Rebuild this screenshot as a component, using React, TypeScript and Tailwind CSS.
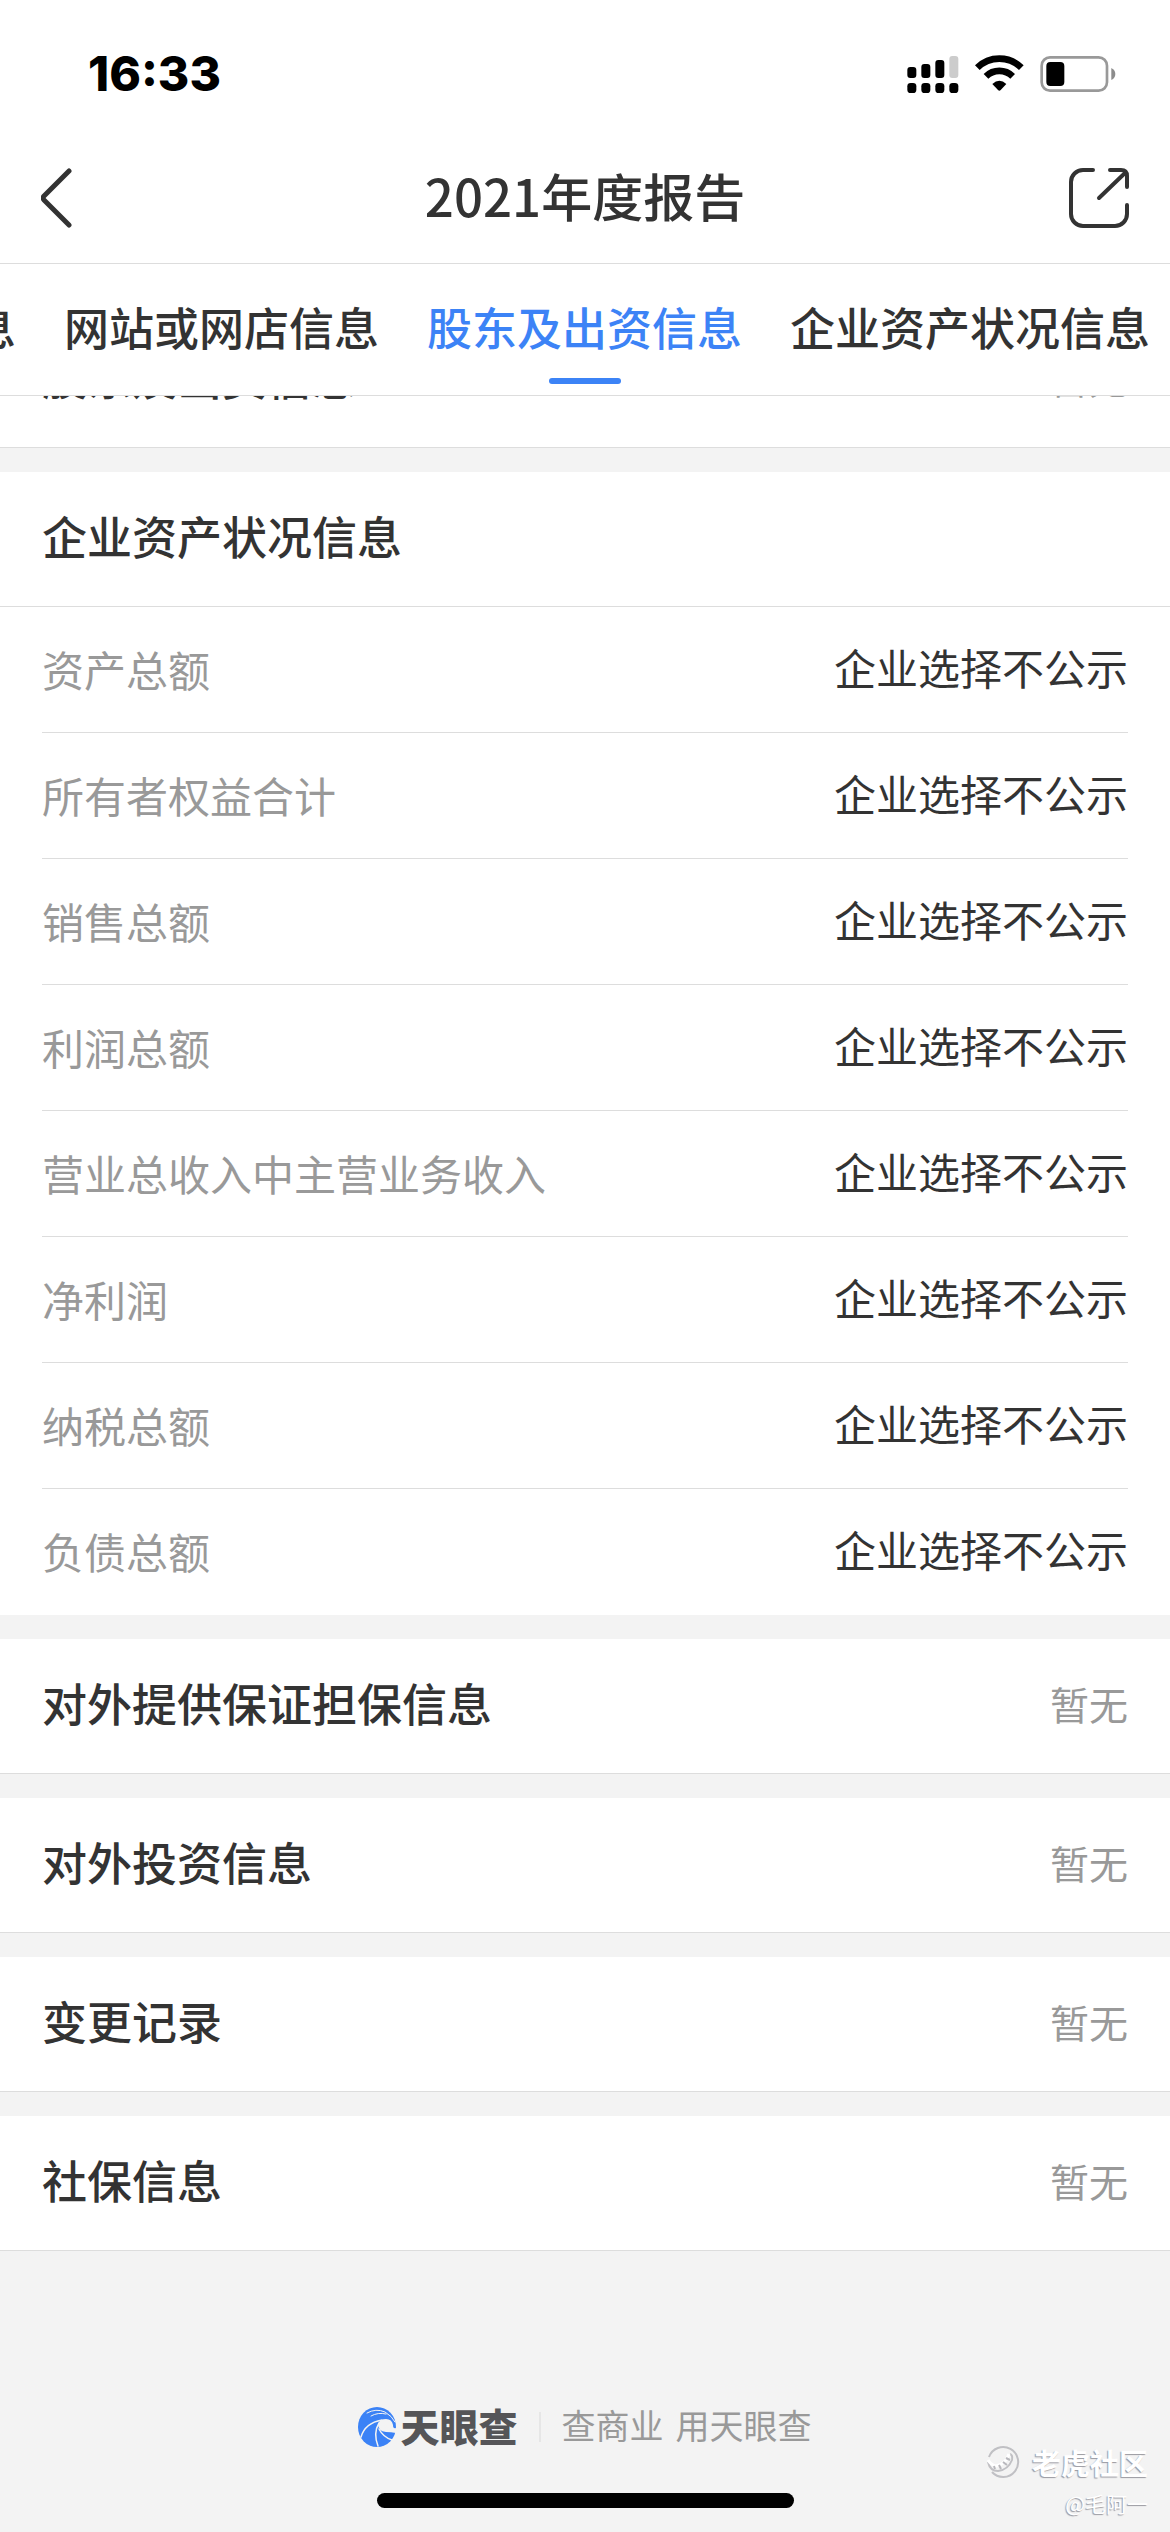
import React from "react";

type AssetRow = {
	label: string;
	value: string;
}

const tabs = ["基本信息", "网站或网店信息", "股东及出资信息", "企业资产状况信息"];
const activeTab = "股东及出资信息";

const assetRows: AssetRow[] = [
	{ label: "资产总额", value: "企业选择不公示" },
	{ label: "所有者权益合计", value: "企业选择不公示" },
	{ label: "销售总额", value: "企业选择不公示" },
	{ label: "利润总额", value: "企业选择不公示" },
	{ label: "营业总收入中主营业务收入", value: "企业选择不公示" },
	{ label: "净利润", value: "企业选择不公示" },
	{ label: "纳税总额", value: "企业选择不公示" },
	{ label: "负债总额", value: "企业选择不公示" },
];

const emptySections = ["对外提供保证担保信息", "对外投资信息", "变更记录", "社保信息"];

const StatusIcons = () => (
	<svg className="w-[210px] h-[38px]" viewBox="0 0 630 114" aria-hidden="true">
		<rect x="1" y="36" width="27" height="33" rx="9" />
		<rect x="43" y="27" width="27" height="42" rx="9" />
		<rect x="85" y="15" width="27" height="54" rx="9" />
		<rect x="127" y="3" width="27" height="66" rx="9" fill="#cccccc" />
		<rect x="1" y="84" width="27" height="30" rx="10" />
		<rect x="43" y="84" width="27" height="30" rx="10" />
		<rect x="85" y="84" width="27" height="30" rx="10" />
		<rect x="127" y="84" width="27" height="30" rx="10" />
		<g fill="none" stroke="#000000" strokeWidth="20">
			<path d="M211 38A94 94 0 0 1 343 38" />
			<path d="M237 64A57 57 0 0 1 317 64" />
		</g>
		<path d="M256 87Q277 67 298 87L281 105Q277 109 273 105Z" />
		<rect x="404" y="7" width="196" height="100" rx="25" fill="none" stroke="#999999" strokeWidth="8" />
		<rect x="418" y="21" width="54" height="72" rx="12" />
		<path d="M613 39Q625 45 625 57Q625 69 613 75Z" fill="#8c8c8c" />
	</svg>
)

const BackIcon = () => (
	<svg className="w-[32px] h-[60px]" viewBox="0 0 32 60" fill="none" stroke="#333333" strokeWidth="5" strokeLinecap="round" strokeLinejoin="round">
		<path d="M28 3L3 28Q1 30 3 32L28 57" />
	</svg>
)

const ShareIcon = () => (
	<svg className="w-[60px] h-[60px]" viewBox="0 0 60 60" fill="none" stroke="#333333" strokeWidth="4" strokeLinecap="round" strokeLinejoin="round">
		<path d="M24 2H14A12 12 0 0 0 2 14V46A12 12 0 0 0 14 58H46A12 12 0 0 0 58 46V37" />
		<path d="M41 2H52Q58 2 58 8V19" />
		<path d="M30 30L56 5" />
	</svg>
)

const BrandIcon = () => (
	<svg className="w-[38px] h-[40px]" viewBox="0 0 38 40" aria-hidden="true">
		<ellipse cx="19" cy="20" rx="19" ry="20" fill="#3b82f6" />
		<path d="M20 17Q22 12 28 12Q34 12 35 18Q35 22 38 21V26Q33 25 28 25Q20 24 20 17Z" fill="#f3f3f3" />
		<g fill="none" stroke="#f3f3f3" strokeLinecap="round">
			<path d="M9 6Q18 1 27 5Q34 9 37 15" strokeWidth="1" />
			<path d="M13 9Q20 5 28 7" strokeWidth="1" />
			<path d="M3 30Q7 16 24 13" strokeWidth="1.5" />
			<path d="M20 39Q15 26 21 16" strokeWidth="1.5" />
			<path d="M21 22Q25 30 34 33" strokeWidth="1.5" />
		</g>
	</svg>
)

const TigerIcon = () => (
	<svg className="w-[34px] h-[34px]" viewBox="0 0 34 34" fill="none" aria-hidden="true">
		<path d="M3 12A15 15 0 1 1 6 27" stroke="#c0c0c4" strokeWidth="2" />
		<path d="M2 17Q4 26 12 26Q22 25 26 15Q27 10 24 9" stroke="#c0c0c4" strokeWidth="2" />
		<path d="M2 15Q5 20 10 21Q20 19 23 9" stroke="#ffffff" strokeWidth="3" />
		<path d="M8 21L9 24M13 20L15 24M17 17L21 20M20 13L24 15" stroke="#b8b8bc" strokeWidth="2" />
	</svg>
)

const SectionHead = ({ title, note }: { title: string; note?: string }) => (
	<div className="h-[135px] px-[42px] pb-[6px] flex justify-between items-center border-b border-[#dddddd] bg-white">
		<h2 className="text-[45px] leading-[64px] font-medium">{title}</h2>
		{note && <span className="text-[39px] leading-[56px] text-[#999999]">{note}</span>}
	</div>
)

const App = () => {
	return (
		<div className="relative min-h-screen flex flex-col overflow-hidden bg-[#f3f3f3] text-[#333333] font-['Noto_Sans_CJK_SC',sans-serif]">
			<header className="relative z-10 bg-white">
				<div className="h-[132px] pt-[16px] pl-[88px] pr-[53px] flex justify-between items-center text-black">
					<span className="text-[48px] leading-[56px] font-extrabold font-['Inter',sans-serif]">16:33</span>
					<StatusIcons />
				</div>
				<div className="h-[132px] px-[41px] flex justify-between items-center border-b border-[#dddddd]">
					<button className="w-[60px] flex" aria-label="返回"><BackIcon /></button>
					<h1 className="pb-[6px] text-[51px] leading-[72px] font-medium">2021年度报告</h1>
					<button aria-label="分享"><ShareIcon /></button>
				</div>
				<nav className="h-[132px] flex overflow-hidden border-b border-[#dddddd]">
					<div className="-ml-[164px] flex gap-[48px]">
						{tabs.map((tab) => (
							<button
								key={tab}
								className={`relative shrink-0 pb-[6px] whitespace-nowrap text-[45px] leading-[64px] font-medium ${tab === activeTab ? "text-[#3c83f6]" : ""}`}
							>
								{tab}
								{tab === activeTab && (
									<span className="absolute bottom-[11px] left-1/2 -translate-x-1/2 w-[72px] h-[6px] rounded-full bg-[#3c83f6]"></span>
								)}
							</button>
						))}
					</div>
				</nav>
			</header>

			{/* list is scrolled part way under the tab bar */}
			<main className="-mt-[83px] flex flex-col gap-[24px]">
				<SectionHead title="股东及出资信息" note="暂无" />
				<section>
					<SectionHead title="企业资产状况信息" />
					<dl className="px-[42px] bg-white">
						{assetRows.map((row) => (
							<div key={row.label} className="h-[126px] flex justify-between items-center border-b border-[#dddddd] last:border-transparent text-[42px] leading-[60px]">
								<dt className="pb-[2px] text-[#999999]">{row.label}</dt>
								<dd className="pb-[6px]">{row.value}</dd>
							</div>
						))}
					</dl>
				</section>
				{emptySections.map((title) => (
					<SectionHead key={title} title={title} note="暂无" />
				))}
			</main>

			<footer className="grow pt-[148px] flex flex-col items-center">
				<div className="flex items-center">
					<BrandIcon />
					<span className="ml-[4px] pb-[4px] text-[39px] leading-[52px] font-black text-[#555558]">天眼查</span>
					<span className="mx-[21px] w-[2px] h-[30px] bg-[#e6e6e6]"></span>
					<span className="pb-[4px] flex gap-[12px] text-[34px] leading-[52px] text-[#999999]">
						<span>查商业</span>
						<span>用天眼查</span>
					</span>
				</div>
				<div className="mt-[38px] w-[417px] h-[15px] rounded-full bg-black"></div>
			</footer>

			<div className="absolute right-[22px] bottom-[10px] flex flex-col items-end text-white [text-shadow:-1px_1px_1px_#98989f]">
				<div className="flex items-center gap-[12px]">
					<TigerIcon />
					<span className="text-[29px] leading-[44px] font-bold">老虎社区</span>
				</div>
				<span className="text-[21px] leading-[38px]">@毛阿一</span>
			</div>
		</div>
	)
}

export default App
